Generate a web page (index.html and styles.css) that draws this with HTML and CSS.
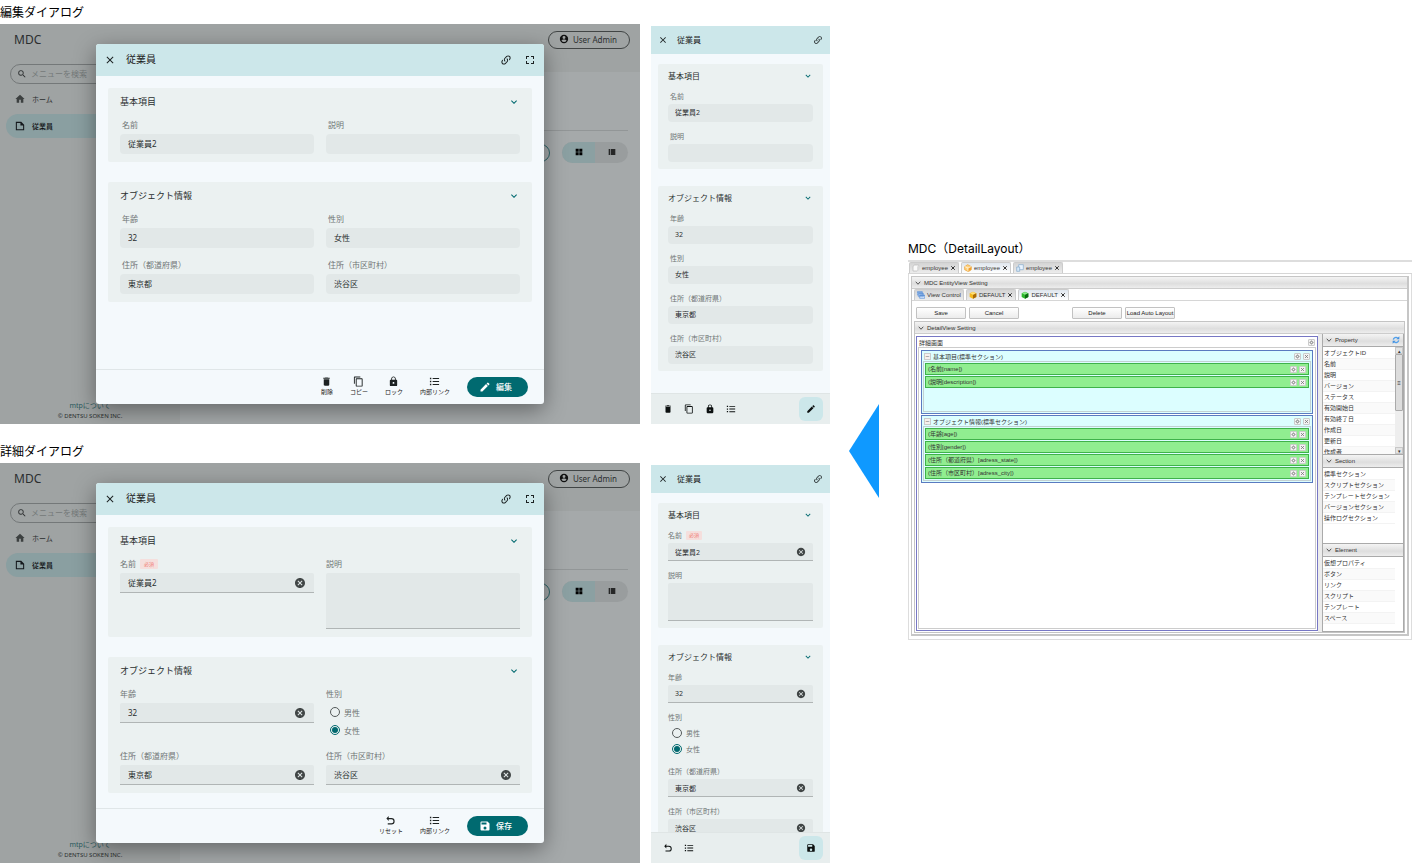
FILE: index.html
```html
<!DOCTYPE html>
<html lang="ja">
<head>
<meta charset="utf-8">
<title>MDC ダイアログ</title>
<link rel="stylesheet" href="styles.css">
</head>
<body>
<svg class="sprite" aria-hidden="true">
  <symbol id="i-close" viewBox="0 0 24 24"><path d="M19 6.41 17.59 5 12 10.59 6.41 5 5 6.41 10.59 12 5 17.59 6.41 19 12 13.41 17.59 19 19 17.59 13.41 12z"/></symbol>
  <symbol id="i-link" viewBox="0 0 24 24"><path d="M10.59 13.41C11 13.8 11 14.44 10.59 14.83C10.2 15.22 9.56 15.22 9.17 14.83C7.22 12.88 7.22 9.71 9.17 7.76L12.71 4.22C14.66 2.27 17.83 2.27 19.78 4.22C21.73 6.17 21.73 9.34 19.78 11.29L18.29 12.78C18.3 11.96 18.17 11.14 17.89 10.36L18.36 9.88C19.54 8.71 19.54 6.81 18.36 5.64C17.19 4.46 15.29 4.46 14.12 5.64L10.59 9.17C9.41 10.34 9.41 12.24 10.59 13.41M13.41 9.17C13.8 8.78 14.44 8.78 14.83 9.17C16.78 11.12 16.78 14.29 14.83 16.24L11.29 19.78C9.34 21.73 6.17 21.73 4.22 19.78C2.27 17.83 2.27 14.66 4.22 12.71L5.71 11.22C5.7 12.04 5.83 12.86 6.11 13.65L5.64 14.12C4.46 15.29 4.46 17.19 5.64 18.36C6.81 19.54 8.71 19.54 9.88 18.36L13.41 14.83C14.59 13.66 14.59 11.76 13.41 10.59C13 10.2 13 9.56 13.41 9.17Z"/></symbol>
  <symbol id="i-full" viewBox="0 0 24 24"><path d="M4 4h6v2H6v4H4zM14 4h6v6h-2V6h-4zM4 14h2v4h4v2H4zM18 14h2v6h-6v-2h4z"/></symbol>
  <symbol id="i-chevron" viewBox="0 0 24 24"><path d="M7.41 8.59 12 13.17l4.59-4.58L18 10l-6 6-6-6z"/></symbol>
  <symbol id="i-delete" viewBox="0 0 24 24"><path d="M6 19c0 1.1.9 2 2 2h8c1.1 0 2-.9 2-2V7H6v12zM19 4h-3.5l-1-1h-5l-1 1H5v2h14V4z"/></symbol>
  <symbol id="i-copy" viewBox="0 0 24 24"><path d="M16 1H4c-1.1 0-2 .9-2 2v14h2V3h12V1zm3 4H8c-1.1 0-2 .9-2 2v14c0 1.1.9 2 2 2h11c1.1 0 2-.9 2-2V7c0-1.1-.9-2-2-2zm0 16H8V7h11v14z"/></symbol>
  <symbol id="i-lock" viewBox="0 0 24 24"><path d="M18 8h-1V6c0-2.76-2.24-5-5-5S7 3.24 7 6v2H6c-1.1 0-2 .9-2 2v10c0 1.1.9 2 2 2h12c1.1 0 2-.9 2-2V10c0-1.1-.9-2-2-2zm-6 9c-1.1 0-2-.9-2-2s.9-2 2-2 2 .9 2 2-.9 2-2 2zm3.1-9H8.9V6c0-1.71 1.39-3.1 3.1-3.1s3.1 1.39 3.1 3.1v2z"/></symbol>
  <symbol id="i-list" viewBox="0 0 24 24"><path d="M2 4h3v3H2zM2 10.5h3v3H2zM2 17h3v3H2zM8 4.5h14v2H8zM8 11h14v2H8zM8 17.5h14v2H8z"/></symbol>
  <symbol id="i-edit" viewBox="0 0 24 24"><path d="M3 17.25V21h3.75L17.81 9.94l-3.75-3.75L3 17.25zM20.71 7.04a1 1 0 0 0 0-1.41l-2.34-2.34a1 1 0 0 0-1.41 0l-1.83 1.83 3.75 3.75z"/></symbol>
  <symbol id="i-save" viewBox="0 0 24 24"><path d="M17 3H5a2 2 0 0 0-2 2v14a2 2 0 0 0 2 2h14a2 2 0 0 0 2-2V7zm-5 16a3 3 0 1 1 0-6 3 3 0 0 1 0 6zm3-10H5V5h10z"/></symbol>
  <symbol id="i-undo" viewBox="0 0 24 24"><path d="M8 2 3 7.500 8 13V9h6a4.500 4.500 0 0 1 0 9H6v2.500h8a7 7 0 0 0 0-14H8z"/></symbol>
  <symbol id="i-cancel" viewBox="0 0 24 24"><path d="M12 2C6.47 2 2 6.47 2 12s4.47 10 10 10 10-4.47 10-10S17.53 2 12 2zm5 13.590L15.590 17 12 13.410 8.410 17 7 15.590 10.590 12 7 8.410 8.410 7 12 10.590 15.590 7 17 8.410 13.410 12z"/></symbol>
  <symbol id="i-search" viewBox="0 0 24 24"><path d="M15.5 14h-.79l-.28-.27A6.47 6.47 0 0 0 16 9.5 6.5 6.5 0 1 0 9.5 16c1.61 0 3.09-.59 4.23-1.57l.27.28v.79l5 4.99L20.49 19zM9.500 14a4.500 4.500 0 1 1 0-9 4.500 4.500 0 0 1 0 9z"/></symbol>
  <symbol id="i-home" viewBox="0 0 24 24"><path d="M10 21v-7h4v7h6v-9h3L12 2 1 12h3v9z"/></symbol>
  <symbol id="i-note" viewBox="0 0 24 24"><path d="M2 2h13l7 7v13H2zM4.500 4.500v15h15V11H13V4.500z"/></symbol>
  <symbol id="i-user" viewBox="0 0 24 24"><path d="M12 2a10 10 0 1 0 0 20 10 10 0 0 0 0-20zm0 3a3.500 3.500 0 1 1 0 7 3.500 3.500 0 0 1 0-7zm0 14.200a7.200 7.200 0 0 1-6-3.220c.030-1.990 4-3.080 6-3.080s5.970 1.090 6 3.080a7.200 7.200 0 0 1-6 3.220z"/></symbol>
  <symbol id="i-grid" viewBox="0 0 24 24"><path d="M2 2h9v9H2zM13 2h9v9h-9zM2 13h9v9H2zM13 13h9v9h-9z"/></symbol>
  <symbol id="i-rows" viewBox="0 0 24 24"><path d="M2 4h5v4H2zM2 10h5v4H2zM2 16h5v4H2zM9 4h13v4H9zM9 10h13v4H9zM9 16h13v4H9z"/></symbol>
  <symbol id="i-gear" viewBox="0 0 24 24"><path fill="none" stroke="currentColor" stroke-width="3" d="M12 7a5 5 0 1 0 0 10 5 5 0 0 0 0-10M12 2v4M12 18v4M2 12h4M18 12h4M5 5l3 3M16 16l3 3M19 5l-3 3M8 16l-3 3"/></symbol>
  <symbol id="i-x" viewBox="0 0 24 24"><path fill="none" stroke="currentColor" stroke-width="4" d="M5 5l14 14M19 5 5 19"/></symbol>
  <symbol id="i-fold" viewBox="0 0 24 24"><path fill="none" stroke="#555" stroke-width="4" d="M3 7l9 10 9-10"/></symbol>
  <symbol id="i-db" viewBox="0 0 24 24"><path fill="#fafafa" stroke="#b5b5b5" stroke-width="2" d="M3 7l5-4h12v14l-5 4H3z"/><path fill="#ddd" d="M15 8l5-4v13l-5 4z"/></symbol>
  <symbol id="i-cube-orange" viewBox="0 0 24 24"><path fill="#ffd27a" stroke="#e79a2b" stroke-width="2" d="M2 8l9-6 11 6v9l-9 6-11-6z"/><path fill="#f2a02c" d="M12 12l9-4v9l-9 5z"/><path stroke="#fff" stroke-width="2" fill="none" d="M3 8l9 4 9-4M12 12v10"/></symbol>
  <symbol id="i-cube-gold" viewBox="0 0 24 24"><path fill="#f5b81c" d="M2 7l10-5 10 5v11l-10 5-10-5z"/><path fill="#ffe07a" d="M3 7l9-4 9 4-9 4z"/><path fill="#a86a08" d="M12 12l10-5v11l-10 5z"/></symbol>
  <symbol id="i-cube-green" viewBox="0 0 24 24"><path fill="#2db82d" d="M2 7l10-5 10 5v11l-10 5-10-5z"/><path fill="#8be88b" d="M3 7l9-4 9 4-9 4z"/><path fill="#0b6a12" d="M12 12l10-5v11l-10 5z"/></symbol>
  <symbol id="i-pages" viewBox="0 0 24 24"><path fill="#eaf4ff" stroke="#84a9cc" stroke-width="2" d="M8 2h14v15H8z"/><path fill="#d6e8f8" stroke="#84a9cc" stroke-width="2" d="M2 9h9v13H2z"/></symbol>
  <symbol id="i-windows" viewBox="0 0 24 24"><path fill="#dcebff" stroke="#5f92d6" stroke-width="2" d="M1 2h15v10H1zM4 7h15v10H4zM8 12h15v10H8z"/><path fill="#5f92d6" d="M1 2h15v3H1zM4 7h15v3H4zM8 12h15v3H8z"/></symbol>
  <symbol id="i-refresh" viewBox="0 0 24 24"><path fill="none" stroke="#4f9fec" stroke-width="4" d="M4 11a8 8 0 0 1 13-5M20 13a8 8 0 0 1-13 5"/><path fill="#3f8fe0" d="M22 1v9h-9zM2 23v-9h9z"/></symbol>
</svg>

<main class="board">
  <div class="examples">
    <section class="example">
      <h2 class="caption">編集ダイアログ</h2>
      <div class="screens">
        <div class="desktop">
          <header class="topbar"><span class="brand">MDC</span><button class="user"><svg class="ic s10"><use href="#i-user"/></svg>User Admin</button></header>
          <div class="shell">
            <nav class="side">
              <label class="search"><svg class="ic s10"><use href="#i-search"/></svg><input type="text" placeholder="メニューを検索" aria-label="メニューを検索"></label>
              <a class="nav" href="#"><svg class="ic s10"><use href="#i-home"/></svg>ホーム</a>
              <a class="nav active" href="#"><svg class="ic s10"><use href="#i-note"/></svg>従業員</a>
              <div class="about"><a href="#">mtpについて</a><small>© DENTSU SOKEN INC.</small></div>
            </nav>
            <div class="content"><div class="rule"></div><div class="tools"><button class="ghost" aria-label="新規"></button><div class="toggle"><button class="on" aria-label="グリッド"><svg class="ic s8"><use href="#i-grid"/></svg></button><button aria-label="リスト"><svg class="ic s8"><use href="#i-rows"/></svg></button></div></div></div>
          </div>
          <div class="dialog" role="dialog" aria-label="従業員">
            <header class="dhead"><button aria-label="閉じる"><svg class="ic"><use href="#i-close"/></svg></button><h3>従業員</h3><button aria-label="リンク"><svg class="ic"><use href="#i-link"/></svg></button><button aria-label="全画面"><svg class="ic"><use href="#i-full"/></svg></button></header>
            <div class="dbody">
              <section class="card"><h4>基本項目<svg class="ic teal"><use href="#i-chevron"/></svg></h4>
                <div class="fields view">
                  <div class="field"><label for="a1">名前</label><div class="box"><input id="a1" type="text" readonly value="従業員2"></div></div>
                  <div class="field"><label for="a2">説明</label><div class="box"><input id="a2" type="text" readonly></div></div>
                </div></section>
              <section class="card"><h4>オブジェクト情報<svg class="ic teal"><use href="#i-chevron"/></svg></h4>
                <div class="fields view">
                  <div class="field"><label for="a3">年齢</label><div class="box"><input id="a3" type="text" readonly value="32"></div></div>
                  <div class="field"><label for="a4">性別</label><div class="box"><input id="a4" type="text" readonly value="女性"></div></div>
                  <div class="field"><label for="a5">住所（都道府県）</label><div class="box"><input id="a5" type="text" readonly value="東京都"></div></div>
                  <div class="field"><label for="a6">住所（市区町村）</label><div class="box"><input id="a6" type="text" readonly value="渋谷区"></div></div>
                </div></section>
            </div>
            <footer class="dfoot">
              <button class="act"><svg class="ic"><use href="#i-delete"/></svg>削除</button>
              <button class="act"><svg class="ic"><use href="#i-copy"/></svg>コピー</button>
              <button class="act"><svg class="ic"><use href="#i-lock"/></svg>ロック</button>
              <button class="act"><svg class="ic"><use href="#i-list"/></svg>内部リンク</button>
              <button class="primary"><svg class="ic"><use href="#i-edit"/></svg>編集</button>
            </footer>
          </div>
        </div>
        <div class="phone">
          <header class="dhead"><button aria-label="閉じる"><svg class="ic"><use href="#i-close"/></svg></button><h3>従業員</h3><button aria-label="リンク"><svg class="ic"><use href="#i-link"/></svg></button></header>
          <div class="dbody">
            <section class="card"><h4>基本項目<svg class="ic teal"><use href="#i-chevron"/></svg></h4>
              <div class="fields view">
                <div class="field"><label for="b1">名前</label><div class="box"><input id="b1" type="text" readonly value="従業員2"></div></div>
                <div class="field"><label for="b2">説明</label><div class="box"><input id="b2" type="text" readonly></div></div>
              </div></section>
            <section class="card"><h4>オブジェクト情報<svg class="ic teal"><use href="#i-chevron"/></svg></h4>
              <div class="fields view">
                <div class="field"><label for="b3">年齢</label><div class="box"><input id="b3" type="text" readonly value="32"></div></div>
                <div class="field"><label for="b4">性別</label><div class="box"><input id="b4" type="text" readonly value="女性"></div></div>
                <div class="field"><label for="b5">住所（都道府県）</label><div class="box"><input id="b5" type="text" readonly value="東京都"></div></div>
                <div class="field"><label for="b6">住所（市区町村）</label><div class="box"><input id="b6" type="text" readonly value="渋谷区"></div></div>
              </div></section>
          </div>
          <footer class="pfoot">
            <button aria-label="削除"><svg class="ic"><use href="#i-delete"/></svg></button><button aria-label="コピー"><svg class="ic"><use href="#i-copy"/></svg></button><button aria-label="ロック"><svg class="ic"><use href="#i-lock"/></svg></button><button aria-label="内部リンク"><svg class="ic"><use href="#i-list"/></svg></button>
            <button class="fab" aria-label="編集"><svg class="ic"><use href="#i-edit"/></svg></button>
          </footer>
        </div>
      </div>
    </section>

    <section class="example">
      <h2 class="caption">詳細ダイアログ</h2>
      <div class="screens">
        <div class="desktop">
          <header class="topbar"><span class="brand">MDC</span><button class="user"><svg class="ic s10"><use href="#i-user"/></svg>User Admin</button></header>
          <div class="shell">
            <nav class="side">
              <label class="search"><svg class="ic s10"><use href="#i-search"/></svg><input type="text" placeholder="メニューを検索" aria-label="メニューを検索"></label>
              <a class="nav" href="#"><svg class="ic s10"><use href="#i-home"/></svg>ホーム</a>
              <a class="nav active" href="#"><svg class="ic s10"><use href="#i-note"/></svg>従業員</a>
              <div class="about"><a href="#">mtpについて</a><small>© DENTSU SOKEN INC.</small></div>
            </nav>
            <div class="content"><div class="rule"></div><div class="tools"><button class="ghost" aria-label="新規"></button><div class="toggle"><button class="on" aria-label="グリッド"><svg class="ic s8"><use href="#i-grid"/></svg></button><button aria-label="リスト"><svg class="ic s8"><use href="#i-rows"/></svg></button></div></div></div>
          </div>
          <div class="dialog" role="dialog" aria-label="従業員">
            <header class="dhead"><button aria-label="閉じる"><svg class="ic"><use href="#i-close"/></svg></button><h3>従業員</h3><button aria-label="リンク"><svg class="ic"><use href="#i-link"/></svg></button><button aria-label="全画面"><svg class="ic"><use href="#i-full"/></svg></button></header>
            <div class="dbody">
              <section class="card"><h4>基本項目<svg class="ic teal"><use href="#i-chevron"/></svg></h4>
                <div class="fields edit">
                  <div class="field"><label for="c1">名前<span class="req">必須</span></label><div class="box"><input id="c1" type="text" value="従業員2"><button aria-label="クリア"><svg class="ic"><use href="#i-cancel"/></svg></button></div></div>
                  <div class="field"><label for="c2">説明</label><div class="box area"><textarea id="c2"></textarea></div></div>
                </div></section>
              <section class="card"><h4>オブジェクト情報<svg class="ic teal"><use href="#i-chevron"/></svg></h4>
                <div class="fields edit">
                  <div class="field"><label for="c3">年齢</label><div class="box"><input id="c3" type="text" value="32"><button aria-label="クリア"><svg class="ic"><use href="#i-cancel"/></svg></button></div></div>
                  <fieldset class="field"><legend>性別</legend><label class="radio"><input type="radio" name="g1">男性</label><label class="radio"><input type="radio" name="g1" checked>女性</label></fieldset>
                  <div class="field"><label for="c5">住所（都道府県）</label><div class="box"><input id="c5" type="text" value="東京都"><button aria-label="クリア"><svg class="ic"><use href="#i-cancel"/></svg></button></div></div>
                  <div class="field"><label for="c6">住所（市区町村）</label><div class="box"><input id="c6" type="text" value="渋谷区"><button aria-label="クリア"><svg class="ic"><use href="#i-cancel"/></svg></button></div></div>
                </div></section>
            </div>
            <footer class="dfoot">
              <button class="act"><svg class="ic"><use href="#i-undo"/></svg>リセット</button>
              <button class="act"><svg class="ic"><use href="#i-list"/></svg>内部リンク</button>
              <button class="primary"><svg class="ic"><use href="#i-save"/></svg>保存</button>
            </footer>
          </div>
        </div>
        <div class="phone">
          <header class="dhead"><button aria-label="閉じる"><svg class="ic"><use href="#i-close"/></svg></button><h3>従業員</h3><button aria-label="リンク"><svg class="ic"><use href="#i-link"/></svg></button></header>
          <div class="dbody">
            <section class="card"><h4>基本項目<svg class="ic teal"><use href="#i-chevron"/></svg></h4>
              <div class="fields edit">
                <div class="field"><label for="d1">名前<span class="req">必須</span></label><div class="box"><input id="d1" type="text" value="従業員2"><button aria-label="クリア"><svg class="ic"><use href="#i-cancel"/></svg></button></div></div>
                <div class="field"><label for="d2">説明</label><div class="box area"><textarea id="d2"></textarea></div></div>
              </div></section>
            <section class="card"><h4>オブジェクト情報<svg class="ic teal"><use href="#i-chevron"/></svg></h4>
              <div class="fields edit">
                <div class="field"><label for="d3">年齢</label><div class="box"><input id="d3" type="text" value="32"><button aria-label="クリア"><svg class="ic"><use href="#i-cancel"/></svg></button></div></div>
                <fieldset class="field"><legend>性別</legend><label class="radio"><input type="radio" name="g2">男性</label><label class="radio"><input type="radio" name="g2" checked>女性</label></fieldset>
                <div class="field"><label for="d5">住所（都道府県）</label><div class="box"><input id="d5" type="text" value="東京都"><button aria-label="クリア"><svg class="ic"><use href="#i-cancel"/></svg></button></div></div>
                <div class="field"><label for="d6">住所（市区町村）</label><div class="box"><input id="d6" type="text" value="渋谷区"><button aria-label="クリア"><svg class="ic"><use href="#i-cancel"/></svg></button></div></div>
              </div></section>
          </div>
          <footer class="pfoot">
            <button aria-label="リセット"><svg class="ic"><use href="#i-undo"/></svg></button><button aria-label="内部リンク"><svg class="ic"><use href="#i-list"/></svg></button>
            <button class="fab" aria-label="保存"><svg class="ic"><use href="#i-save"/></svg></button>
          </footer>
        </div>
      </div>
    </section>
  </div>

  <svg class="arrow" viewBox="0 0 30 94" preserveAspectRatio="none" aria-hidden="true"><path fill="#0f99ff" d="M0 47 30 0v94z"/></svg>

  <section class="builder">
    <h2 class="btitle">MDC（DetailLayout）</h2>
    <div class="window">
      <div class="tabs outer">
        <button class="tab"><svg class="ic s8"><use href="#i-db"/></svg>employee<svg class="ic s6"><use href="#i-x"/></svg></button>
        <button class="tab on"><svg class="ic s8"><use href="#i-cube-orange"/></svg>employee<svg class="ic s6"><use href="#i-x"/></svg></button>
        <button class="tab"><svg class="ic s8"><use href="#i-pages"/></svg>employee<svg class="ic s6"><use href="#i-x"/></svg></button>
      </div>
      <div class="wbody">
        <div class="entity">
          <div class="bar"><svg class="ic s6"><use href="#i-fold"/></svg>MDC EntityView Setting</div>
          <div class="tabs inner">
            <button class="tab"><svg class="ic s8"><use href="#i-windows"/></svg>View Control</button>
            <button class="tab"><svg class="ic s8"><use href="#i-cube-gold"/></svg>DEFAULT<svg class="ic s6"><use href="#i-x"/></svg></button>
            <button class="tab on"><svg class="ic s8"><use href="#i-cube-green"/></svg>DEFAULT<svg class="ic s6"><use href="#i-x"/></svg></button>
          </div>
          <div class="viewpane">
            <div class="toolbar"><button>Save</button><button>Cancel</button><button class="apart">Delete</button><button>Load Auto Layout</button></div>
            <div class="detail">
              <div class="bar"><svg class="ic s6"><use href="#i-fold"/></svg>DetailView Setting</div>
              <div class="split">
                <div class="canvas">
                  <div class="chead">詳細画面<span class="mini"><button aria-label="設定"><svg class="ic"><use href="#i-gear"/></svg></button></span></div>
                  <div class="cinner">
                    <div class="sec">
                      <div class="shead"><button class="minus" aria-label="折りたたむ">–</button>基本項目(標準セクション)<span class="mini"><button aria-label="設定"><svg class="ic"><use href="#i-gear"/></svg></button><button aria-label="削除"><svg class="ic"><use href="#i-x"/></svg></button></span></div>
                      <div class="drop tall">
                        <div class="prop">(名前[name])<span class="mini"><button aria-label="設定"><svg class="ic"><use href="#i-gear"/></svg></button><button aria-label="削除"><svg class="ic"><use href="#i-x"/></svg></button></span></div>
                        <div class="prop">(説明[description])<span class="mini"><button aria-label="設定"><svg class="ic"><use href="#i-gear"/></svg></button><button aria-label="削除"><svg class="ic"><use href="#i-x"/></svg></button></span></div>
                      </div>
                    </div>
                    <div class="sec">
                      <div class="shead"><button class="minus" aria-label="折りたたむ">–</button>オブジェクト情報(標準セクション)<span class="mini"><button aria-label="設定"><svg class="ic"><use href="#i-gear"/></svg></button><button aria-label="削除"><svg class="ic"><use href="#i-x"/></svg></button></span></div>
                      <div class="drop">
                        <div class="prop">(年齢[age])<span class="mini"><button aria-label="設定"><svg class="ic"><use href="#i-gear"/></svg></button><button aria-label="削除"><svg class="ic"><use href="#i-x"/></svg></button></span></div>
                        <div class="prop">(性別[gender])<span class="mini"><button aria-label="設定"><svg class="ic"><use href="#i-gear"/></svg></button><button aria-label="削除"><svg class="ic"><use href="#i-x"/></svg></button></span></div>
                        <div class="prop">(住所（都道府県）[adress_state])<span class="mini"><button aria-label="設定"><svg class="ic"><use href="#i-gear"/></svg></button><button aria-label="削除"><svg class="ic"><use href="#i-x"/></svg></button></span></div>
                        <div class="prop">(住所（市区町村）[adress_city])<span class="mini"><button aria-label="設定"><svg class="ic"><use href="#i-gear"/></svg></button><button aria-label="削除"><svg class="ic"><use href="#i-x"/></svg></button></span></div>
                      </div>
                    </div>
                  </div>
                </div>
                <div class="grip"></div>
                <aside class="palette">
                  <div class="bar"><svg class="ic s6"><use href="#i-fold"/></svg>Property<svg class="ic s8 end"><use href="#i-refresh"/></svg></div>
                  <div class="plist props">
                    <ul><li>オブジェクトID</li><li>名前</li><li>説明</li><li>バージョン</li><li>ステータス</li><li>有効開始日</li><li>有効終了日</li><li>作成日</li><li>更新日</li><li>作成者</li></ul>
                    <div class="scroll"><span class="sbtn">▴</span><span class="thumb">≡</span><span class="sbtn last">▾</span></div>
                  </div>
                  <div class="bar"><svg class="ic s6"><use href="#i-fold"/></svg>Section</div>
                  <div class="plist"><ul><li>標準セクション</li><li>スクリプトセクション</li><li>テンプレートセクション</li><li>バージョンセクション</li><li>操作ログセクション</li></ul></div>
                  <div class="bar"><svg class="ic s6"><use href="#i-fold"/></svg>Element</div>
                  <div class="plist"><ul><li>仮想プロパティ</li><li>ボタン</li><li>リンク</li><li>スクリプト</li><li>テンプレート</li><li>スペース</li></ul></div>
                </aside>
              </div>
            </div>
          </div>
        </div>
      </div>
    </div>
  </section>
</main>
</body>
</html>
```

FILE: styles.css
```css
* { box-sizing: border-box; }
body { margin: 0; background: #fff; color: #111; font-family: "Noto Sans", "Noto Sans CJK JP", sans-serif; }
h2, h3, h4, ul, fieldset, legend { margin: 0; padding: 0; border: 0; font-weight: 400; list-style: none; }
button, input, textarea { font: inherit; color: inherit; margin: 0; padding: 0; border: 0; background: none; border-radius: 0; }
button { display: flex; align-items: center; justify-content: center; white-space: nowrap; }
a { color: inherit; text-decoration: none; }
.sprite { display: none; }
.ic { display: block; flex: none; width: 12px; height: 12px; fill: currentColor; }
.s6 { width: 6px; height: 6px; }
.s8 { width: 8px; height: 8px; }
.s10 { width: 10px; height: 10px; }
.teal { color: #00696f; }

.board { display: grid; grid-template-columns: minmax(0, 830fr) 19px 30px 29px minmax(0, 504fr); align-items: start; min-width: 1200px; padding-right: 3px; }
.arrow { grid-column: 3; width: 100%; height: 94px; margin-top: 404px; }
.builder { grid-column: 5; }

/* Example screens */
.examples { display: grid; grid-template-rows: minmax(0, 1fr) minmax(0, 1fr); gap: 15px; height: 100vh; min-height: 820px; }
.example { display: flex; flex-direction: column; min-height: 0; }
.caption { flex: none; height: 24px; line-height: 24px; font-size: 12px; color: #000; font-family: "Noto Sans CJK JP", sans-serif; }
.screens { flex: 1; min-height: 0; display: grid; grid-template-columns: minmax(0, 640fr) minmax(0, 179fr); grid-template-rows: minmax(0, 1fr); column-gap: 11px; }

.desktop { position: relative; overflow: hidden; display: flex; flex-direction: column; background: #a5a9aa; color: #2b2e2f; }
.topbar { flex: none; height: 48px; padding: 0 10px 17px 14px; display: flex; align-items: center; justify-content: space-between; background: #9fa3a3; }
.brand { font-size: 12px; }
.user { height: 18px; padding: 0 12px 1px 10px; gap: 4px; border: 1px solid #414545; border-radius: 9px; font-size: 8px; }
.user .ic { color: #111; }
.shell { flex: 1; display: flex; min-height: 0; }
.side { width: 28.125%; background: #9fa3a3; display: flex; flex-direction: column; margin-top: -8px; padding: 0 0 0 6px; }
.search { flex: none; display: flex; align-items: center; gap: 4px; height: 20px; margin: 0 8px 0 4px; padding: 0 6px 1px 6px; border: 1px solid #747879; border-radius: 10px; font-size: 8px; }
.search input { width: 100%; min-width: 0; }
.search input::placeholder { color: #747979; opacity: 1; }
.nav { flex: none; display: flex; align-items: center; gap: 7px; height: 24px; margin-top: 3px; padding: 0 0 1px 9px; font-size: 7px; }
.nav .ic { color: #3c4040; }
.nav.active { background: #8a9fa1; border-radius: 12px 0 0 12px; color: #101414; font-weight: 500; }
.active .ic { color: #14181c; }
.about { margin-top: auto; padding: 0 6px 2px 0; display: flex; flex-direction: column; align-items: center; }
.about a { color: #2a5a5d; font-size: 7px; line-height: 11px; }
.about small { font-size: 6px; line-height: 11px; }
.content { flex: 1; padding: 58px 12px 0; }
.rule { height: 1px; background: #929697; }
.tools { display: flex; justify-content: flex-end; align-items: center; gap: 12px; padding-top: 11px; }
.ghost { width: 64px; height: 18px; border: 1px solid #2b6468; border-radius: 9px; }
.toggle { display: flex; width: 66px; height: 21px; border-radius: 11px; overflow: hidden; background: #999d9e; color: #000; }
.toggle button { flex: 1; padding-bottom: 1px; }
.toggle .on { background: #8ba0a2; }

.dialog { position: absolute; inset: 20px 15%; display: flex; flex-direction: column; background: #f4f9fc; border-radius: 3px; box-shadow: 0 6px 22px rgba(0, 0, 0, .4); overflow: hidden; }
.dhead { flex: none; height: 32px; padding: 0 8px; display: flex; align-items: center; gap: 10px; background: #cce7ea; color: #1c2223; }
.dhead h3 { flex: 1; padding-bottom: 3px; font-size: 10px; }
.dhead button + button { margin-left: 2px; }
.dbody { flex: 1; min-height: 0; overflow: hidden; display: flex; flex-direction: column; gap: 20px; padding: 12px; }
.card { flex: none; padding: 0 12px 8px; background: #ebf1f1; border-radius: 2px; color: #2a2f2f; }
.card h4 { display: flex; align-items: center; justify-content: space-between; height: 28px; padding-bottom: 1px; font-size: 9px; }
.fields { display: grid; grid-template-columns: minmax(0, 1fr) minmax(0, 1fr); gap: 8px 12px; font-size: 8px; }
.field { min-width: 0; }
.field > label, .field > legend { display: flex; align-items: center; height: 18px; padding-bottom: 1px; color: #6f7575; }
.view label { padding-left: 2px; }
.box { display: flex; align-items: center; height: 20px; padding: 0 8px; background: #e2e8e8; border-radius: 4px; }
.box input, .box textarea { flex: 1; min-width: 0; width: 100%; outline: 0; }
.view .box input { padding-bottom: 2px; }
.box button { color: #414646; }
.edit .box { border-radius: 2px 2px 0 0; border-bottom: 1px solid #b0b5b5; }
.edit .area { height: 56px; }
.area textarea { height: 100%; resize: none; }
.req { margin-left: 4px; width: 18px; height: 10px; line-height: 10px; text-align: center; font-size: 5px; background: #f5dfdd; color: #f08078; border-radius: 1px; }
.field > .radio { gap: 4px; padding-left: 4px; padding-bottom: 0; }
.radio input { appearance: none; display: flex; width: 10px; height: 10px; padding: 1px; border: 1px solid #545a5a; border-radius: 50%; }
.radio input:checked { border-color: #00696f; }
.radio input:checked::before { content: ""; flex: 1; border-radius: 50%; background: #00696f; }

.dfoot { flex: none; height: 35px; padding: 0 16px 0 0; display: flex; align-items: center; justify-content: flex-end; gap: 17px; border-top: 1px solid #e0e6e8; }
.act { flex-direction: column; padding-bottom: 1px; font-size: 6px; line-height: 10px; color: #1d2222; }
.act .ic { width: 11px; height: 11px; }
.primary { height: 20px; padding: 0 16px 1px 12px; gap: 5px; border-radius: 10px; background: #006a70; color: #fff; font-size: 8px; font-weight: 500; }

.phone { margin-top: 2px; display: flex; flex-direction: column; min-height: 0; background: #f4f9fc; }
.phone .dhead { height: 28px; padding: 0 7px; gap: 9px; }
.phone .dhead .ic, .phone .box .ic, .phone .pfoot .ic, .phone h4 .ic { width: 10px; height: 10px; }
.phone h3 { padding-bottom: 2px; font-size: 8px; }
.phone .dbody { padding: 10px 7px 0; gap: 17px; }
.phone .card { padding: 0 10px 7px; }
.phone h4 { height: 24px; font-size: 8px; }
.phone .fields { grid-template-columns: minmax(0, 1fr); gap: 6px; font-size: 7px; }
.phone .field > label, .phone .field > legend { height: 16px; padding-bottom: 0; }
.phone .box { height: 18px; padding: 0 7px; }
.phone .area { height: 38px; }
.phone .req { width: 16px; height: 9px; line-height: 9px; }
.pfoot { flex: none; height: 31px; padding: 0 7px 0 12px; display: flex; align-items: center; gap: 11px; background: #e8eeee; border-top: 1px solid #dfe5e5; color: #0c1010; }
.fab { margin-left: auto; width: 24px; height: 24px; border-radius: 6px; background: #cce7ea; }

/* Layout builder */
.builder { padding-top: 238px; color: #333; font-size: 6px; line-height: 8px; font-family: "Liberation Sans", "Noto Sans CJK JP", sans-serif; }
.btitle { height: 22px; line-height: 22px; font-size: 12px; color: #000; font-family: Inter, "Noto Sans CJK JP", sans-serif; }
.window { border-top: 2px solid #ddd; }
.tabs { display: flex; align-items: flex-end; gap: 2px; border-bottom: 1px solid #d6d6d6; }
.outer { height: 12px; padding-left: 1px; }
.tab { height: 11px; min-width: 49px; padding: 0 2px; gap: 2px; color: #333; border: 1px solid #ccc; border-bottom: 0; border-radius: 2px 2px 0 0; background: linear-gradient(#d4d4d4, #ececec); }
.tab.on { background: linear-gradient(#dfe6ee, #fff); }
.wbody { padding: 2px 2px 3px; border: 1px solid #ddd; border-top: 0; }
.entity { border: 1px solid #c6c6c6; border-width: 1px 2px 2px 1px; }
.bar { flex: none; height: 12px; display: flex; align-items: center; gap: 3px; padding: 0 3px; background: linear-gradient(#f4f4f4, #dedede 60%, #ededed); border-bottom: 1px solid #ccc; }
.end { margin-left: auto; }
.inner { height: 12px; padding-left: 2px; }
.viewpane { padding: 0 2px 1px; }
.toolbar { display: flex; align-items: center; gap: 3px; height: 20px; padding: 4px 2px 1px; }
.toolbar button { width: 50px; height: 12px; border: 1px solid #c2c2c2; border-radius: 1px; background: linear-gradient(#fff, #ececec); color: #222; }
.toolbar .apart { margin-left: 50px; }
.detail { border: 1px solid #c4c4c4; }
.split { display: flex; }
.canvas { flex: 1; min-width: 0; margin: 2px 0 1px 1px; padding: 1px; border: 1px solid #7777c4; min-height: 295px; display: flex; flex-direction: column; }
.chead { flex: none; height: 9px; display: flex; align-items: center; justify-content: space-between; padding: 0 1px; }
.mini { margin-left: auto; display: flex; gap: 2px; }
.mini button { width: 7px; height: 7px; border: 1px solid #ccc; border-radius: 1px; background: #f3f3f3; color: #777; }
.mini .ic { width: 5px; height: 5px; }
.cinner { flex: 1; border: 1px solid #ccc; padding: 2px; display: flex; flex-direction: column; gap: 1px; }
.sec { border: 1px solid #5a7ac0; background: #dcfeff; padding: 1px; }
.shead { height: 9px; display: flex; align-items: center; gap: 2px; padding: 0 1px; }
.minus { width: 7px; height: 7px; border: 1px solid #ccc; background: #f6f0ee; line-height: 5px; }
.drop { display: flex; flex-direction: column; gap: 1px; border: 1px solid #c3d0d2; padding: 1px; }
.tall { min-height: 51px; }
.prop { height: 12px; display: flex; align-items: center; padding: 0 2px; border: 1px solid #3fb24a; background: #90ee90; }
.grip { width: 4px; background: #ececec; }
.palette { flex: none; width: 82px; display: flex; flex-direction: column; border: 1px solid #aaa; border-width: 0 1px; }
.palette .bar { border-bottom-color: #aaa; height: 13px; }
.plist { flex: 1; overflow: hidden; display: flex; border-bottom: 1px solid #aaa; }
.props { flex: none; height: 108px; }
.plist ul { flex: 1; min-width: 0; margin-right: 8px; padding-top: 1px; }
.props ul { margin-right: 0; }
.plist li { height: 11px; line-height: 11px; padding-left: 1px; white-space: nowrap; border-bottom: 1px solid #f3f3f3; }
.plist li:nth-child(even) { background: #fafafa; }
.scroll { width: 8px; display: flex; flex-direction: column; background: #eee; }
.sbtn { height: 7px; line-height: 6px; text-align: center; border: 1px solid #c8c8c8; background: #e4e4e4; font-size: 5px; }
.thumb { height: 57px; display: flex; align-items: center; justify-content: center; border: 1px solid #aaa; border-radius: 1px; background: #ddd; }
.last { margin-top: auto; }
```
